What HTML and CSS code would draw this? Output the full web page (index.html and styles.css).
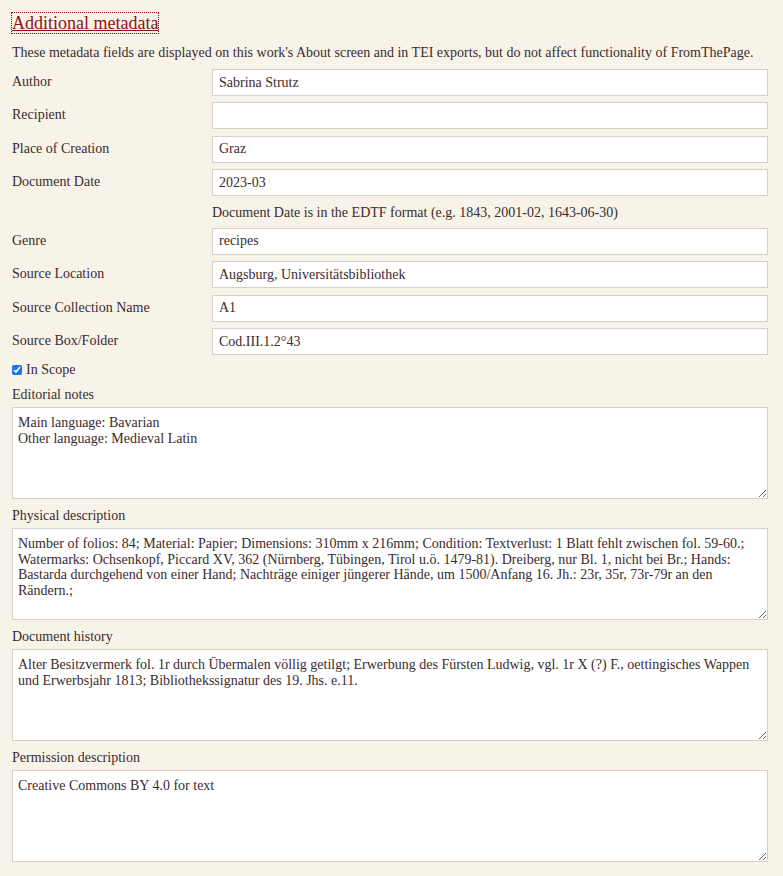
FILE: index.html
```html
<!DOCTYPE html>
<html lang="en">
<head>
<meta charset="utf-8">
<title>Additional metadata</title>
<link rel="stylesheet" href="styles.css">
</head>
<body>
<div class="page">
  <h3 class="heading"><a href="#" class="heading-link">Additional metadata</a></h3>
  <p class="intro">These metadata fields are displayed on this work's About screen and in TEI exports, but do not affect functionality of FromThePage.</p>
  <div class="grid">
    <label class="lbl">Author</label><input class="field" type="text" value="Sabrina Strutz">
    <label class="lbl">Recipient</label><input class="field" type="text" value="">
    <label class="lbl">Place of Creation</label><input class="field" type="text" value="Graz">
    <label class="lbl">Document Date</label><input class="field" type="text" value="2023-03">
    <span></span><div class="note">Document Date is in the EDTF format (e.g. 1843, 2001-02, 1643-06-30)</div>
    <label class="lbl">Genre</label><input class="field" type="text" value="recipes">
    <label class="lbl">Source Location</label><input class="field" type="text" value="Augsburg, Universitätsbibliothek">
    <label class="lbl">Source Collection Name</label><input class="field" type="text" value="A1">
    <label class="lbl">Source Box/Folder</label><input class="field" type="text" value="Cod.III.1.2°43">
  </div>
  <label class="check"><input type="checkbox" checked class="cb"> In Scope</label>
  <div class="block">
    <label class="blabel">Editorial notes</label>
    <textarea class="area">Main language: Bavarian
Other language: Medieval Latin</textarea>
  </div>
  <div class="block">
    <label class="blabel">Physical description</label>
    <textarea class="area">Number of folios: 84; Material: Papier; Dimensions: 310mm x 216mm; Condition: Textverlust: 1 Blatt fehlt zwischen fol. 59-60.; Watermarks: Ochsenkopf, Piccard XV, 362 (Nürnberg, Tübingen, Tirol u.ö. 1479-81). Dreiberg, nur Bl. 1, nicht bei Br.; Hands: Bastarda durchgehend von einer Hand; Nachträge einiger jüngerer Hände, um 1500/Anfang 16. Jh.: 23r, 35r, 73r-79r an den Rändern.;</textarea>
  </div>
  <div class="block">
    <label class="blabel">Document history</label>
    <textarea class="area">Alter Besitzvermerk fol. 1r durch Übermalen völlig getilgt; Erwerbung des Fürsten Ludwig, vgl. 1r X (?) F., oettingisches Wappen und Erwerbsjahr 1813; Bibliothekssignatur des 19. Jhs. e.11.</textarea>
  </div>
  <div class="block">
    <label class="blabel">Permission description</label>
    <textarea class="area">Creative Commons BY 4.0 for text</textarea>
  </div>
</div>
</body>
</html>
```
FILE: styles.css
```css
html, body {
  margin: 0;
  padding: 0;
  background: #f8f3e9;
}
body {
  font-family: "Liberation Serif", "DejaVu Serif", serif;
  font-size: 14px;
  color: #3b2b2e;
}
.page {
  padding: 12px 15px 0 12px;
}
.heading {
  margin: 0;
  font-size: 18px;
  font-weight: normal;
  line-height: 23px;
}
.heading-link {
  color: #8a1214;
  text-decoration: underline;
  outline: 1px dotted #6a0e10;
  text-decoration-thickness: 1px;
}
.intro {
  margin: 8px 0 7px;
  line-height: 19px;
}
.grid {
  display: grid;
  grid-template-columns: 200px 1fr;
  row-gap: 6.4px;
  align-items: start;
}
.lbl {
  padding-top: 3px;
  line-height: 19px;
}
.field {
  box-sizing: border-box;
  height: 27px;
  margin: 0;
  border: 1px solid #d6d1c7;
  background: #fff;
  font-family: inherit;
  font-size: 14px;
  color: #3b2b2e;
  padding: 0 6px;
  outline: none;
}
.note {
  line-height: 19px;
}
.check {
  display: flex;
  align-items: center;
  gap: 4px;
  margin-top: 5px;
  line-height: 19px;
}
.cb {
  margin: 0;
  width: 10px;
  height: 10px;
  accent-color: #1a73e8;
}
.block {
  display: flex;
  flex-direction: column;
  margin-top: 6px;
}
.blabel {
  line-height: 19px;
  margin-bottom: 3px;
}
.area {
  box-sizing: border-box;
  height: 92px;
  margin: 0 0 1px;
  border: 1px solid #d6d1c7;
  background: #fff;
  font-family: inherit;
  font-size: 14px;
  line-height: 15.5px;
  color: #3b2b2e;
  padding: 7px 5px;
  resize: vertical;
  outline: none;
}
```
